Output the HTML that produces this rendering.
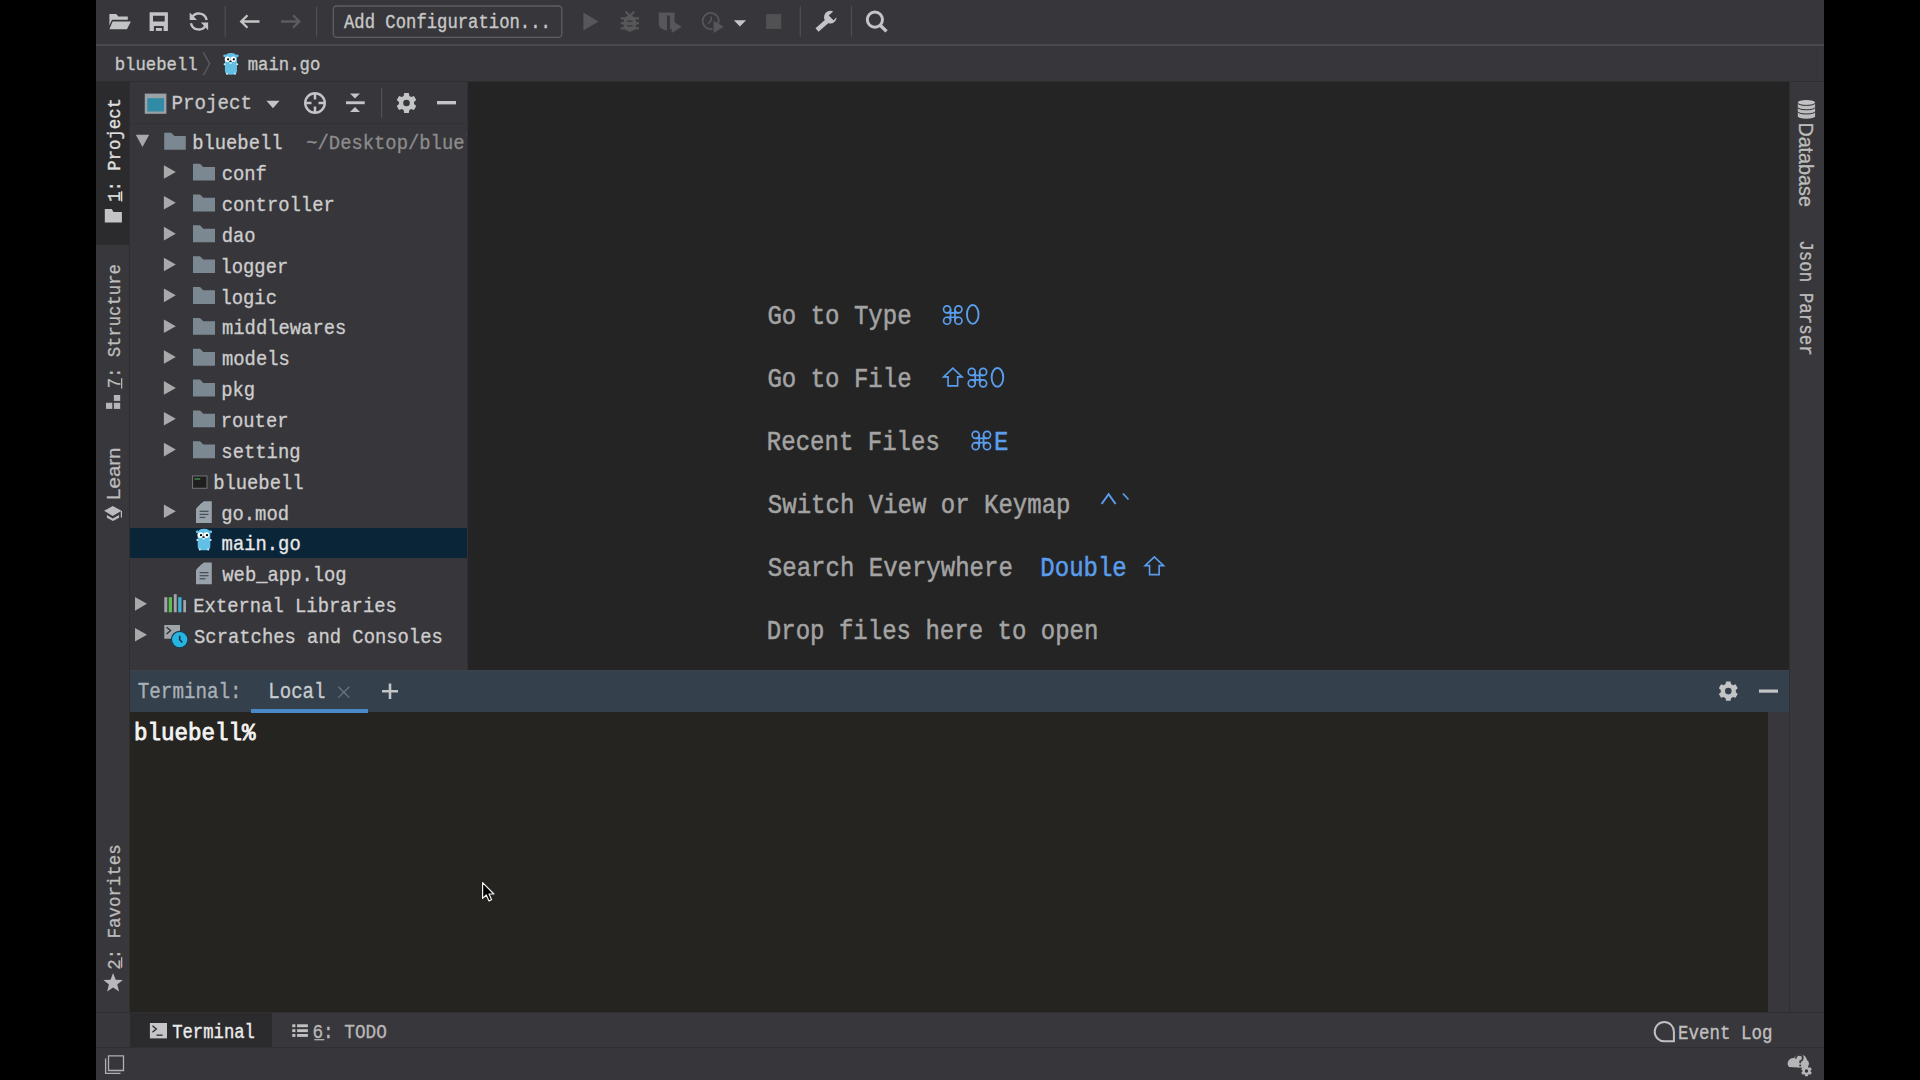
<!DOCTYPE html>
<html><head><meta charset="utf-8"><style>
*{margin:0;padding:0}
html,body{width:1920px;height:1080px;overflow:hidden;background:#000}
svg{position:absolute;left:0;top:0;display:block}

</style></head><body>
<svg width="1920" height="1080" viewBox="0 0 1920 1080">
<rect x="96" y="0" width="1728" height="1080" fill="#37373b" />
<rect x="96" y="44" width="1728" height="2" fill="#4a4a4e" />
<rect x="96" y="81" width="1728" height="1" fill="#2e2e31" />
<rect x="1816" y="46" width="1" height="35" fill="#343438" />
<rect x="96" y="82" width="34" height="931" fill="#38373b" />
<rect x="96" y="82" width="33" height="163" fill="#2b2b2d" />
<rect x="129" y="82" width="1" height="931" fill="#2f2f31" />
<rect x="130" y="82" width="338" height="588" fill="#37363b" />
<rect x="130" y="123" width="338" height="1" fill="#323235" />
<rect x="468" y="82" width="1322" height="588" fill="#242424" />
<rect x="1790" y="82" width="34" height="931" fill="#38373b" />
<rect x="1789" y="82" width="1" height="931" fill="#2f2f31" />
<rect x="130" y="670" width="1659" height="42" fill="#34404b" />
<rect x="130" y="670" width="1659" height="1" fill="#3c434b" />
<rect x="130" y="712" width="1638" height="301" fill="#252420" />
<rect x="1768" y="712" width="21" height="301" fill="#38373b" />
<rect x="96" y="1012" width="1728" height="1" fill="#2f2f31" />
<rect x="96" y="1013" width="1728" height="34" fill="#38373b" />
<rect x="130" y="1013" width="142" height="34" fill="#2b2b2d" />
<rect x="96" y="1047" width="1728" height="1" fill="#303033" />
<rect x="96" y="1048" width="1728" height="32" fill="#37373b" />
<rect x="467" y="82" width="1" height="588" fill="#313035" />
<rect x="130" y="528" width="337" height="30" fill="#0a2538" />
<text transform="translate(344.00,27.70) scale(1,1.12)" font-family="Liberation Mono" font-size="17.246673864296987" fill="#c8c8c8" stroke="#c8c8c8" stroke-width="0.3" xml:space="preserve">Add Configuration...</text>
<text transform="translate(114.69,70.00) scale(1,1.06)" font-family="Liberation Mono" font-size="17.302809224318658" fill="#c8c8c8" stroke="#c8c8c8" stroke-width="0.3" xml:space="preserve">bluebell</text>
<text transform="translate(247.66,70.00) scale(1,1.06)" font-family="Liberation Mono" font-size="17.302809224318658" fill="#c8c8c8" stroke="#c8c8c8" stroke-width="0.3" xml:space="preserve">main.go</text>
<text transform="translate(171.48,108.80) scale(1,1.08)" font-family="Liberation Mono" font-size="19.16344634828047" fill="#c8c8c8" stroke="#c8c8c8" stroke-width="0.3" xml:space="preserve">Project</text>
<text transform="translate(192.15,149.30) scale(1,1.12)" font-family="Liberation Mono" font-size="18.85" fill="#cdcdcd" stroke="#cdcdcd" stroke-width="0.3" xml:space="preserve">bluebell</text>
<text transform="translate(221.70,180.15) scale(1,1.12)" font-family="Liberation Mono" font-size="18.85" fill="#cdcdcd" stroke="#cdcdcd" stroke-width="0.3" xml:space="preserve">conf</text>
<text transform="translate(221.70,211.00) scale(1,1.12)" font-family="Liberation Mono" font-size="18.85" fill="#cdcdcd" stroke="#cdcdcd" stroke-width="0.3" xml:space="preserve">controller</text>
<text transform="translate(221.63,241.85) scale(1,1.12)" font-family="Liberation Mono" font-size="18.85" fill="#cdcdcd" stroke="#cdcdcd" stroke-width="0.3" xml:space="preserve">dao</text>
<text transform="translate(220.44,272.70) scale(1,1.12)" font-family="Liberation Mono" font-size="18.85" fill="#cdcdcd" stroke="#cdcdcd" stroke-width="0.3" xml:space="preserve">logger</text>
<text transform="translate(220.44,303.55) scale(1,1.12)" font-family="Liberation Mono" font-size="18.85" fill="#cdcdcd" stroke="#cdcdcd" stroke-width="0.3" xml:space="preserve">logic</text>
<text transform="translate(221.99,334.40) scale(1,1.12)" font-family="Liberation Mono" font-size="18.85" fill="#cdcdcd" stroke="#cdcdcd" stroke-width="0.3" xml:space="preserve">middlewares</text>
<text transform="translate(221.99,365.25) scale(1,1.12)" font-family="Liberation Mono" font-size="18.85" fill="#cdcdcd" stroke="#cdcdcd" stroke-width="0.3" xml:space="preserve">models</text>
<text transform="translate(221.25,396.10) scale(1,1.12)" font-family="Liberation Mono" font-size="18.85" fill="#cdcdcd" stroke="#cdcdcd" stroke-width="0.3" xml:space="preserve">pkg</text>
<text transform="translate(220.67,426.95) scale(1,1.12)" font-family="Liberation Mono" font-size="18.85" fill="#cdcdcd" stroke="#cdcdcd" stroke-width="0.3" xml:space="preserve">router</text>
<text transform="translate(221.36,457.80) scale(1,1.12)" font-family="Liberation Mono" font-size="18.85" fill="#cdcdcd" stroke="#cdcdcd" stroke-width="0.3" xml:space="preserve">setting</text>
<text transform="translate(213.15,488.65) scale(1,1.12)" font-family="Liberation Mono" font-size="18.85" fill="#cdcdcd" stroke="#cdcdcd" stroke-width="0.3" xml:space="preserve">bluebell</text>
<text transform="translate(221.18,519.50) scale(1,1.12)" font-family="Liberation Mono" font-size="18.85" fill="#cdcdcd" stroke="#cdcdcd" stroke-width="0.3" xml:space="preserve">go.mod</text>
<text transform="translate(221.59,550.35) scale(1,1.12)" font-family="Liberation Mono" font-size="18.85" fill="#e8e8e8" stroke="#e8e8e8" stroke-width="0.3" xml:space="preserve">main.go</text>
<text transform="translate(222.31,581.20) scale(1,1.12)" font-family="Liberation Mono" font-size="18.85" fill="#cdcdcd" stroke="#cdcdcd" stroke-width="0.3" xml:space="preserve">web_app.log</text>
<text transform="translate(193.31,612.05) scale(1,1.12)" font-family="Liberation Mono" font-size="18.85" fill="#cdcdcd" stroke="#cdcdcd" stroke-width="0.3" xml:space="preserve">External Libraries</text>
<text transform="translate(194.07,642.90) scale(1,1.12)" font-family="Liberation Mono" font-size="18.85" fill="#cdcdcd" stroke="#cdcdcd" stroke-width="0.3" xml:space="preserve">Scratches and Consoles</text>
<clipPath id="pc"><rect x="130" y="82" width="337" height="588"/></clipPath><g clip-path="url(#pc)">
<text transform="translate(306.23,149.30) scale(1,1.12)" font-family="Liberation Mono" font-size="18.85" fill="#8c8c8c" stroke="#8c8c8c" stroke-width="0.3" xml:space="preserve">~/Desktop/bluel</text>
</g>
<text transform="translate(767.42,324.40) scale(1,1.17)" font-family="Liberation Mono" font-size="24.03" fill="#a3a3a3" stroke="#a3a3a3" stroke-width="0.45" xml:space="preserve">Go to Type</text>
<text transform="translate(767.42,387.40) scale(1,1.17)" font-family="Liberation Mono" font-size="24.03" fill="#a3a3a3" stroke="#a3a3a3" stroke-width="0.45" xml:space="preserve">Go to File</text>
<text transform="translate(766.85,450.40) scale(1,1.17)" font-family="Liberation Mono" font-size="24.03" fill="#a3a3a3" stroke="#a3a3a3" stroke-width="0.45" xml:space="preserve">Recent Files</text>
<text transform="translate(767.82,513.40) scale(1,1.17)" font-family="Liberation Mono" font-size="24.03" fill="#a3a3a3" stroke="#a3a3a3" stroke-width="0.45" xml:space="preserve">Switch View or Keymap</text>
<text transform="translate(767.82,576.40) scale(1,1.17)" font-family="Liberation Mono" font-size="24.03" fill="#a3a3a3" stroke="#a3a3a3" stroke-width="0.45" xml:space="preserve">Search Everywhere</text>
<text transform="translate(766.85,639.40) scale(1,1.17)" font-family="Liberation Mono" font-size="24.03" fill="#a3a3a3" stroke="#a3a3a3" stroke-width="0.45" xml:space="preserve">Drop files here to open</text>
<path d="M947.05,312.85 H958.45 M947.05,317.25 H958.45 M950.55,309.35 V320.75 M954.95,309.35 V320.75" fill="none" stroke="#5a9ded" stroke-width="1.7" />
<circle cx="947.05" cy="309.35" r="3.5" fill="none" stroke="#5a9ded" stroke-width="1.7"/>
<circle cx="947.05" cy="320.75" r="3.5" fill="none" stroke="#5a9ded" stroke-width="1.7"/>
<circle cx="958.45" cy="309.35" r="3.5" fill="none" stroke="#5a9ded" stroke-width="1.7"/>
<circle cx="958.45" cy="320.75" r="3.5" fill="none" stroke="#5a9ded" stroke-width="1.7"/>
<ellipse cx="972.75" cy="314.45" rx="5.8" ry="9.4" fill="none" stroke="#5a9ded" stroke-width="1.9"/>
<path d="M952.85,368.2 L943.6,376.90000000000003 H948.0500000000001 V385.90000000000003 H957.6500000000001 V376.90000000000003 H962.1 Z" fill="none" stroke="#5a9ded" stroke-width="1.6" stroke-linejoin="miter"/>
<path d="M971.75,375.45 H983.1500000000001 M971.75,379.84999999999997 H983.1500000000001 M975.25,371.95 V383.34999999999997 M979.6500000000001,371.95 V383.34999999999997" fill="none" stroke="#5a9ded" stroke-width="1.7" />
<circle cx="971.75" cy="371.95" r="3.5" fill="none" stroke="#5a9ded" stroke-width="1.7"/>
<circle cx="971.75" cy="383.35" r="3.5" fill="none" stroke="#5a9ded" stroke-width="1.7"/>
<circle cx="983.15" cy="371.95" r="3.5" fill="none" stroke="#5a9ded" stroke-width="1.7"/>
<circle cx="983.15" cy="383.35" r="3.5" fill="none" stroke="#5a9ded" stroke-width="1.7"/>
<ellipse cx="997.45" cy="377.4" rx="5.8" ry="9.4" fill="none" stroke="#5a9ded" stroke-width="1.9"/>
<path d="M975.65,438.3 H987.0500000000001 M975.65,442.7 H987.0500000000001 M979.15,434.8 V446.2 M983.5500000000001,434.8 V446.2" fill="none" stroke="#5a9ded" stroke-width="1.7" />
<circle cx="975.65" cy="434.80" r="3.5" fill="none" stroke="#5a9ded" stroke-width="1.7"/>
<circle cx="975.65" cy="446.20" r="3.5" fill="none" stroke="#5a9ded" stroke-width="1.7"/>
<circle cx="987.05" cy="434.80" r="3.5" fill="none" stroke="#5a9ded" stroke-width="1.7"/>
<circle cx="987.05" cy="446.20" r="3.5" fill="none" stroke="#5a9ded" stroke-width="1.7"/>
<text transform="translate(993.90,449.60) scale(1,1.17)" font-family="Liberation Mono" font-size="24.03" fill="#5a9ded" stroke="#5a9ded" stroke-width="0.45" xml:space="preserve">E</text>
<path d="M1101.6,504 L1108.6,494.2 L1115.6,504" fill="none" stroke="#5a9ded" stroke-width="2" />
<path d="M1123,493.5 L1128.5,499.5" fill="none" stroke="#5a9ded" stroke-width="1.8" />
<text transform="translate(1040.30,576.40) scale(1,1.17)" font-family="Liberation Mono" font-size="24.03" fill="#5a9ded" stroke="#5a9ded" stroke-width="0.45" xml:space="preserve">Double</text>
<path d="M1154.3500000000001,556.9 L1145.1000000000001,565.6 H1149.55 V574.6 H1159.15 V565.6 H1163.6000000000001 Z" fill="none" stroke="#5a9ded" stroke-width="1.6" stroke-linejoin="miter"/>
<text transform="translate(137.79,697.60) scale(1,1.15)" font-family="Liberation Mono" font-size="19.236006484218557" fill="#a9b0b8" stroke="#a9b0b8" stroke-width="0.3" xml:space="preserve">Terminal:</text>
<text transform="translate(268.30,697.60) scale(1,1.15)" font-family="Liberation Mono" font-size="19.04869715271786" fill="#c8ccd0" stroke="#c8ccd0" stroke-width="0.3" xml:space="preserve">Local</text>
<rect x="251" y="709" width="117" height="4" fill="#4a88c7" />
<text transform="translate(134.03,739.80) scale(1,1.05)" font-family="Liberation Mono" font-size="22.525553615730956" fill="#f4f4f4" stroke="#f4f4f4" stroke-width="0.8" xml:space="preserve">bluebell%</text>
<text transform="translate(172.16,1038.10) scale(1,1.18)" font-family="Liberation Mono" font-size="17.245421549310382" fill="#ececec" stroke="#ececec" stroke-width="0.3" xml:space="preserve">Terminal</text>
<text transform="translate(312.44,1038.10) scale(1,1.18)" font-family="Liberation Mono" font-size="17.72598691154739" fill="#b8b8b8" stroke="#b8b8b8" stroke-width="0.3" xml:space="preserve">6: TODO</text>
<text transform="translate(1678.12,1038.70) scale(1,1.18)" font-family="Liberation Mono" font-size="17.474076837001117" fill="#c0c0c0" stroke="#c0c0c0" stroke-width="0.3" xml:space="preserve">Event Log</text>
<text transform="translate(120.00,201.85) rotate(-90) scale(1,1.1)" font-family="Liberation Mono" font-size="17.32" fill="#e0e0e0" stroke="#e0e0e0" stroke-width="0.3" xml:space="preserve">1: Project</text>
<text transform="translate(120.00,388.34) rotate(-90) scale(1,1.1)" font-family="Liberation Mono" font-size="17.26" fill="#bdbdbd" stroke="#bdbdbd" stroke-width="0.3" xml:space="preserve">7: Structure</text>
<text transform="translate(120.00,969.73) rotate(-90) scale(1,1.1)" font-family="Liberation Mono" font-size="17.42" fill="#bdbdbd" stroke="#bdbdbd" stroke-width="0.3" xml:space="preserve">2: Favorites</text>
<text transform="translate(119.90,499.88) rotate(-90) scale(1,0.92)" font-family="Liberation Sans" font-size="20.49" fill="#bdbdbd" stroke="#bdbdbd" stroke-width="0.3" xml:space="preserve">Learn</text>
<text transform="translate(1799.30,122.38) rotate(90)" font-family="Liberation Sans" font-size="19.74" fill="#bdbdbd" stroke="#bdbdbd" stroke-width="0.3" xml:space="preserve">Database</text>
<text transform="translate(1799.60,240.19) rotate(90) scale(1,1.1)" font-family="Liberation Mono" font-size="17.54" fill="#bdbdbd" stroke="#bdbdbd" stroke-width="0.3" xml:space="preserve">Json Parser</text>
<path d="M109.4,14 H116.3 L118.3,16.6 H127.8 V19.8 H112 L109.4,25.5 Z" fill="#c3c4c6" />
<path d="M112.6,21.5 H130.9 L126.9,29.2 H109.4 Z" fill="#c3c4c6" />
<path d="M149.6,12.3 H167.9 V30.9 H149.6 Z M153,15.7 V21.4 H164.7 V15.7 Z M153.9,26 V30.9 H163.6 V26 Z" fill="#c3c4c6" fill-rule="evenodd"/>
<rect x="155.9" y="28" width="6" height="2.9" fill="#c3c4c6" />
<path d="M191.74,17.74 A8,8 0 0 1 206.64,19.9" fill="none" stroke="#c3c4c6" stroke-width="2.4" />
<path d="M205.86,25.26 A8,8 0 0 1 190.97,23.16" fill="none" stroke="#c3c4c6" stroke-width="2.4" />
<path d="M189.7,12.6 V20 H197 Z" fill="#c3c4c6" />
<path d="M208.1,30.3 V22.6 H200.9 Z" fill="#c3c4c6" />
<rect x="224.6" y="6.2" width="1.2" height="30.5" fill="#4f4f53" />
<rect x="316.0" y="6.2" width="1.2" height="30.5" fill="#4f4f53" />
<rect x="799.6999999999999" y="6.2" width="1.2" height="30.5" fill="#4f4f53" />
<rect x="850.9" y="6.2" width="1.2" height="30.5" fill="#4f4f53" />
<rect x="381.0" y="88" width="1.2" height="30" fill="#505054" />
<path d="M259.5,21.5 H241.5 M247.5,15.2 L241.2,21.5 L247.5,27.8" fill="none" stroke="#c3c4c6" stroke-width="2.3" />
<path d="M281,21.5 H299 M293,15.2 L299.3,21.5 L293,27.8" fill="none" stroke="#5c5c5f" stroke-width="2.3" />
<rect x="333.3" y="6" width="228.5" height="31.3" rx="3.5" fill="none" stroke="#5f5f63" stroke-width="1.3"/>
<path d="M583.4,12.6 L583.4,30.6 L598.6,21.5 Z" fill="#57575a" />
<ellipse cx="629.9" cy="23.5" rx="6.6" ry="8.2" fill="#57575a"/>
<path d="M625.5,11.5 L629.9,16 L634.3,11.5" fill="none" stroke="#57575a" stroke-width="2" />
<rect x="620.7" y="17.2" width="18.3" height="2.2" fill="#57575a" />
<rect x="620.7" y="22.099999999999998" width="18.3" height="2.2" fill="#57575a" />
<rect x="620.7" y="27.2" width="18.3" height="2.2" fill="#57575a" />
<rect x="627" y="20.5" width="5.6" height="1.4" fill="#3a3a3d" />
<rect x="627" y="25.1" width="5.6" height="1.4" fill="#3a3a3d" />
<path d="M658.8,12.6 H674.6 V24 Q674.6,29 666.7,30.6 Q658.8,29 658.8,24 Z" fill="#57575a" />
<rect x="667" y="15.5" width="3" height="15.5" fill="#37373b" />
<path d="M671.7,20.6 V33 L681.7,26.8 Z" fill="#57575a" />
<path d="M716.5,26.5 A8,8 0 1 0 712.5,28.8" fill="none" stroke="#57575a" stroke-width="1.7" />
<path d="M711.2,16.4 L711.2,20 L708.3,23.7" fill="none" stroke="#57575a" stroke-width="1.5" />
<path d="M713.5,20.8 V33.1 L723.7,26.8 Z" fill="#57575a" />
<path d="M733.8,20.3 H746.1 L739.95,26.6 Z" fill="#c3c4c6" />
<rect x="766.1" y="14.1" width="15.1" height="14.8" fill="#515154" />
<path d="M817,30 L827.5,20.8" fill="none" stroke="#c3c4c6" stroke-width="4.6" />
<path d="M833.2,11.6 A6.3,6.3 0 1 0 836.6,17.2 L833.5,20.3 L828.7,15.5 Z" fill="#c3c4c6" />
<circle cx="874.9" cy="19.6" r="7.6" fill="none" stroke="#c3c4c6" stroke-width="3"/>
<path d="M880.2,25.2 L886.5,31.4" fill="none" stroke="#c3c4c6" stroke-width="3.4" />
<path d="M203.4,52.4 L209.6,63.8 L203.4,75.3" fill="none" stroke="#5d5d61" stroke-width="1.3" />
<g>
<path d="M224.94400000000002,58.425 Q224.94400000000002,53 230.95000000000002,53 Q236.95600000000002,53 236.95600000000002,58.425 V70.794 Q236.95600000000002,74.7 230.95000000000002,74.7 Q224.94400000000002,74.7 224.94400000000002,70.794 Z" fill="#62c0e6" />
<circle cx="224.66" cy="55.82" r="1.43" fill="#62c0e6"/>
<circle cx="237.24" cy="55.82" r="1.43" fill="#62c0e6"/>
<circle cx="224.66" cy="64.28" r="1.00" fill="#d8eef5"/>
<circle cx="237.24" cy="64.28" r="1.00" fill="#d8eef5"/>
<circle cx="227.52" cy="59.29" r="2.72" fill="#ffffff"/>
<circle cx="233.24" cy="59.29" r="2.72" fill="#ffffff"/>
<circle cx="228.09" cy="59.29" r="1.14" fill="#000"/>
<circle cx="233.81" cy="59.29" r="1.14" fill="#000"/>
<ellipse cx="230.52" cy="61.25" rx="1.29" ry="0.87" fill="#222"/>
<rect x="229.52" y="62.33" width="2.15" height="1.30" fill="#e8f4f8"/>
<circle cx="226.95" cy="73.83" r="1.00" fill="#d8eef5"/>
<circle cx="234.95" cy="73.83" r="1.00" fill="#d8eef5"/>
</g>
<rect x="144.75" y="93.6" width="21.65" height="20.2" fill="#9aa1a7" />
<rect x="147.3" y="98.2" width="16.7" height="13.3" fill="#2f8ba6" />
<path d="M266.4,100.7 H279.5 L272.95,108.2 Z" fill="#c3c4c6" />
<circle cx="315" cy="103" r="9.8" fill="none" stroke="#c3c4c6" stroke-width="2.4"/>
<path d="M315,93 V99.5" fill="none" stroke="#c3c4c6" stroke-width="2.5" />
<path d="M315,106.5 V113" fill="none" stroke="#c3c4c6" stroke-width="2.5" />
<path d="M305,103 H311.5" fill="none" stroke="#c3c4c6" stroke-width="2.5" />
<path d="M318.5,103 H325" fill="none" stroke="#c3c4c6" stroke-width="2.5" />
<rect x="346" y="101.3" width="18.7" height="2.9" fill="#c3c4c6" />
<path d="M350,93.4 H360 L355,98.5 Z" fill="#c3c4c6" />
<path d="M350,112 H360 L355,107 Z" fill="#c3c4c6" />
<path d="M403.62,95.96 L404.20,93.06 L408.80,93.06 L409.38,95.96 L411.16,96.99 L413.96,96.04 L416.26,100.02 L414.03,101.97 L414.03,104.03 L416.26,105.98 L413.96,109.96 L411.16,109.01 L409.38,110.04 L408.80,112.94 L404.20,112.94 L403.62,110.04 L401.84,109.01 L399.04,109.96 L396.74,105.98 L398.97,104.03 L398.97,101.97 L396.74,100.02 L399.04,96.04 L401.84,96.99 Z M409.80,103.00 A3.3,3.3 0 1,0 403.20,103.00 A3.3,3.3 0 1,0 409.80,103.00 Z" fill="#c3c4c6" fill-rule="evenodd"/>
<rect x="437" y="101" width="19" height="3.4" fill="#c3c4c6" />
<path d="M135.8,134.7 H149.2 L142.5,146.9 Z" fill="#a9a9ab" />
<path d="M164.2,132.7 H171.2 L174.5,136.0 H185.79999999999998 V149.7 H164.2 Z" fill="#7b8892" />
<path d="M163.9,165.15 V178.75 L175.8,171.95 Z" fill="#a9a9ab" />
<path d="M193,163.65 H200 L203.3,166.95000000000002 H215 V180.55 H193 Z" fill="#7b8892" />
<path d="M163.9,196.00 V209.60 L175.8,202.80 Z" fill="#a9a9ab" />
<path d="M193,194.5 H200 L203.3,197.8 H215 V211.4 H193 Z" fill="#7b8892" />
<path d="M163.9,226.85 V240.45 L175.8,233.65 Z" fill="#a9a9ab" />
<path d="M193,225.35000000000002 H200 L203.3,228.65000000000003 H215 V242.25000000000003 H193 Z" fill="#7b8892" />
<path d="M163.9,257.70 V271.30 L175.8,264.50 Z" fill="#a9a9ab" />
<path d="M193,256.20000000000005 H200 L203.3,259.50000000000006 H215 V273.1 H193 Z" fill="#7b8892" />
<path d="M163.9,288.55 V302.15 L175.8,295.35 Z" fill="#a9a9ab" />
<path d="M193,287.05 H200 L203.3,290.35 H215 V303.95 H193 Z" fill="#7b8892" />
<path d="M163.9,319.40 V333.00 L175.8,326.20 Z" fill="#a9a9ab" />
<path d="M193,317.90000000000003 H200 L203.3,321.20000000000005 H215 V334.8 H193 Z" fill="#7b8892" />
<path d="M163.9,350.25 V363.85 L175.8,357.05 Z" fill="#a9a9ab" />
<path d="M193,348.75 H200 L203.3,352.05 H215 V365.65 H193 Z" fill="#7b8892" />
<path d="M163.9,381.10 V394.70 L175.8,387.90 Z" fill="#a9a9ab" />
<path d="M193,379.6 H200 L203.3,382.90000000000003 H215 V396.5 H193 Z" fill="#7b8892" />
<path d="M163.9,411.95 V425.55 L175.8,418.75 Z" fill="#a9a9ab" />
<path d="M193,410.45000000000005 H200 L203.3,413.75000000000006 H215 V427.35 H193 Z" fill="#7b8892" />
<path d="M163.9,442.80 V456.40 L175.8,449.60 Z" fill="#a9a9ab" />
<path d="M193,441.3 H200 L203.3,444.6 H215 V458.2 H193 Z" fill="#7b8892" />
<rect x="192.6" y="475.95" width="14.4" height="12.3" fill="#1f1f1f" stroke="#75757a" stroke-width="1"/>
<rect x="194.5" y="478.45000000000005" width="5.7" height="1.1" fill="#4fae4f" />
<path d="M163.9,504.50 V518.10 L175.8,511.30 Z" fill="#a9a9ab" />
<path d="M203.8,501.3 H211.8 V523.0 H196 V508.8 Z" fill="#98a2aa" />
<path d="M196.8,507.7 H202.4 V502.2 Z" fill="#98a2aa" />
<rect x="199.6" y="510.7" width="8.9" height="1.3" fill="#4a5055" />
<rect x="199.6" y="513.75" width="8.9" height="1.3" fill="#4a5055" />
<rect x="199.6" y="516.8" width="5.8" height="1.3" fill="#4a5055" />
<g>
<path d="M197.7,534.225 Q197.7,528.85 204.0,528.85 Q210.3,528.85 210.3,534.225 V546.48 Q210.3,550.35 204.0,550.35 Q197.7,550.35 197.7,546.48 Z" fill="#62c0e6" />
<circle cx="197.40" cy="531.64" r="1.50" fill="#62c0e6"/>
<circle cx="210.60" cy="531.64" r="1.50" fill="#62c0e6"/>
<circle cx="197.40" cy="540.03" r="1.05" fill="#d8eef5"/>
<circle cx="210.60" cy="540.03" r="1.05" fill="#d8eef5"/>
<circle cx="200.40" cy="535.09" r="2.85" fill="#ffffff"/>
<circle cx="206.40" cy="535.09" r="2.85" fill="#ffffff"/>
<circle cx="201.00" cy="535.09" r="1.20" fill="#000"/>
<circle cx="207.00" cy="535.09" r="1.20" fill="#000"/>
<ellipse cx="203.55" cy="537.02" rx="1.35" ry="0.86" fill="#222"/>
<rect x="202.50" y="538.10" width="2.25" height="1.29" fill="#e8f4f8"/>
<circle cx="199.80" cy="549.49" r="1.05" fill="#d8eef5"/>
<circle cx="208.20" cy="549.49" r="1.05" fill="#d8eef5"/>
</g>
<path d="M203.8,562.6 H211.8 V584.3000000000001 H196 V570.1 Z" fill="#98a2aa" />
<path d="M196.8,569.0 H202.4 V563.5 Z" fill="#98a2aa" />
<rect x="199.6" y="572.0" width="8.9" height="1.3" fill="#4a5055" />
<rect x="199.6" y="575.05" width="8.9" height="1.3" fill="#4a5055" />
<rect x="199.6" y="578.1" width="5.8" height="1.3" fill="#4a5055" />
<path d="M135,597.05 V610.65 L147,603.85 Z" fill="#a9a9ab" />
<rect x="164.3" y="597.2" width="3.0" height="15.099999999999909" fill="#a0a5aa" />
<rect x="168.7" y="597.2" width="3.3000000000000114" height="15.099999999999909" fill="#5cbf4f" />
<rect x="173.8" y="594.2" width="2.8999999999999773" height="18.09999999999991" fill="#a0a5aa" />
<rect x="178.2" y="597.2" width="3.3000000000000114" height="15.099999999999909" fill="#3fb3d6" />
<rect x="183.3" y="600.1" width="2.6999999999999886" height="12.199999999999932" fill="#a0a5aa" />
<path d="M135,627.90 V641.50 L147,634.70 Z" fill="#a9a9ab" />
<rect x="164.3" y="625" width="15.7" height="13.7" fill="#a0a5aa" />
<path d="M166.6,627.2 L170.6,630.6 L166.6,634" fill="none" stroke="#2b2f33" stroke-width="1.3" />
<circle cx="179.7" cy="639.6" r="8.3" fill="#27b4e2" stroke="#173c4a" stroke-width="1.2"/>
<path d="M179.7,635.8 V639.8 L182.3,642.6" fill="none" stroke="#10303c" stroke-width="1.5" />
<path d="M338.3,686.8 L349.3,697.6 M349.3,686.8 L338.3,697.6" fill="none" stroke="#6e7780" stroke-width="1.2" />
<path d="M390,683.5 V699 M382,691.2 H398" fill="none" stroke="#c3c4c6" stroke-width="2.6" />
<path d="M1725.55,684.01 L1726.10,681.45 L1730.50,681.45 L1731.05,684.01 L1733.06,685.18 L1735.56,684.37 L1737.76,688.18 L1735.81,689.94 L1735.81,692.26 L1737.76,694.02 L1735.56,697.83 L1733.06,697.02 L1731.05,698.19 L1730.50,700.75 L1726.10,700.75 L1725.55,698.19 L1723.54,697.02 L1721.04,697.83 L1718.84,694.02 L1720.79,692.26 L1720.79,689.94 L1718.84,688.18 L1721.04,684.37 L1723.54,685.18 Z M1731.60,691.10 A3.3,3.3 0 1,0 1725.00,691.10 A3.3,3.3 0 1,0 1731.60,691.10 Z" fill="#c3c4c6" fill-rule="evenodd"/>
<rect x="1759" y="689.5" width="19" height="3.2" fill="#c3c4c6" />
<path d="M104.8,209 H111.8 L113.5,211.9 H121.9 V222.5 H104.8 Z" fill="#c4c4c6" />
<rect x="113.9" y="395" width="6.3" height="5.9" fill="#b5b5b7" />
<rect x="106" y="402.8" width="6.3" height="6.1" fill="#b5b5b7" />
<rect x="113.9" y="402.8" width="6.3" height="6.1" fill="#b5b5b7" />
<path d="M104.1,510.8 L112.7,506 L121.6,510.8 L112.7,516 Z" fill="#bcbcbe" />
<path d="M106.9,515 V517.8 L113,521.1 L119.1,517.8 V515 L112.7,518.6 Z" fill="#bcbcbe" />
<rect x="120.8" y="511" width="1.2" height="6.5" fill="#bcbcbe" />
<path d="M113.10,973.00 L115.69,979.64 L122.80,980.05 L117.28,984.56 L119.10,991.45 L113.10,987.60 L107.10,991.45 L108.92,984.56 L103.40,980.05 L110.51,979.64 Z" fill="#b8b8ba" />
<rect x="121.0" y="191.2" width="1.3" height="10.3" fill="#dcdcdc" />
<rect x="121.0" y="378.2" width="1.3" height="10.4" fill="#b5b5b7" />
<rect x="121.0" y="957.2" width="1.3" height="10.4" fill="#b5b5b7" />
<path d="M1797.8,102.5 V116.2 A8.65,2.5 0 0 0 1815.1,116.2 V102.5 Z" fill="#bcbcbe" />
<ellipse cx="1806.45" cy="102.5" rx="8.65" ry="2.5" fill="#c4c4c6"/>
<path d="M1797.6,102.9 A8.85,2.5 0 0 0 1815.3,102.9" fill="none" stroke="#2e2e31" stroke-width="1.0" />
<path d="M1797.6,107.3 A8.85,2.5 0 0 0 1815.3,107.3" fill="none" stroke="#2e2e31" stroke-width="1.0" />
<path d="M1797.6,111.5 A8.85,2.5 0 0 0 1815.3,111.5" fill="none" stroke="#2e2e31" stroke-width="1.0" />
<rect x="149.9" y="1023" width="17.1" height="15.4" fill="#c6c6c8" />
<path d="M152.5,1025.8 L156.3,1029 L152.5,1032.2" fill="none" stroke="#2a2a2c" stroke-width="1.3" />
<rect x="156.5" y="1034.5" width="6" height="1.3" fill="#2a2a2c" />
<rect x="292.25" y="1024.3" width="3.15" height="2.9" fill="#c0c0c2" />
<rect x="297.1" y="1024.3" width="10.8" height="2.9" fill="#c0c0c2" />
<rect x="292.25" y="1029.2" width="3.15" height="2.9" fill="#c0c0c2" />
<rect x="297.1" y="1029.2" width="10.8" height="2.9" fill="#c0c0c2" />
<rect x="292.25" y="1034" width="3.15" height="2.9" fill="#c0c0c2" />
<rect x="297.1" y="1034" width="10.8" height="2.9" fill="#c0c0c2" />
<rect x="314.2" y="1039.1" width="10.2" height="1.2" fill="#b8b8b8" />
<path d="M1673.9,1041.3 H1664.3 A9.6,9.6 0 1 1 1673.9,1031.7 Z" fill="none" stroke="#c0c0c2" stroke-width="2.0" />
<path d="M108.5,1055.8 H123.5 V1070.5 H108.5 Z" fill="none" stroke="#b0b0b2" stroke-width="1.3" />
<path d="M105.6,1058.5 V1073.3 H120.5" fill="none" stroke="#b0b0b2" stroke-width="1.3" />
<path d="M1789,1067 A5.5,5.5 0 0 1 1794,1058 A7,7 0 0 1 1807,1060 A4.5,4.5 0 0 1 1806,1068 Z" fill="#b5b5b7" />
<path d="M1795.6,1058.6 Q1796,1054.8 1799.4,1054.8 Q1802.8,1054.8 1802.8,1058 Q1802.8,1060.2 1800.2,1061.2 V1063.2" fill="none" stroke="#38383c" stroke-width="1.7" />
<rect x="1799.3" y="1064.6" width="1.8" height="1.8" fill="#38383c" />
<path d="M1804.88,1067.24 L1805.20,1065.66 L1807.80,1065.66 L1808.12,1067.24 L1808.95,1067.71 L1810.48,1067.20 L1811.78,1069.45 L1810.57,1070.53 L1810.57,1071.47 L1811.78,1072.55 L1810.48,1074.80 L1808.95,1074.29 L1808.12,1074.76 L1807.80,1076.34 L1805.20,1076.34 L1804.88,1074.76 L1804.05,1074.29 L1802.52,1074.80 L1801.22,1072.55 L1802.43,1071.47 L1802.43,1070.53 L1801.22,1069.45 L1802.52,1067.20 L1804.05,1067.71 Z M1808.20,1071.00 A1.7,1.7 0 1,0 1804.80,1071.00 A1.7,1.7 0 1,0 1808.20,1071.00 Z" fill="#b5b5b7" fill-rule="evenodd"/>
<g transform="translate(482.6,882.6)"><path d="M0,0 V15.8 L3.7,12.4 L6.4,18.3 L9,17.2 L6.4,11.4 H11.3 Z" fill="#000" stroke="#f0f0f0" stroke-width="1.2" stroke-linejoin="round"/></g>
</svg>
</body></html>
